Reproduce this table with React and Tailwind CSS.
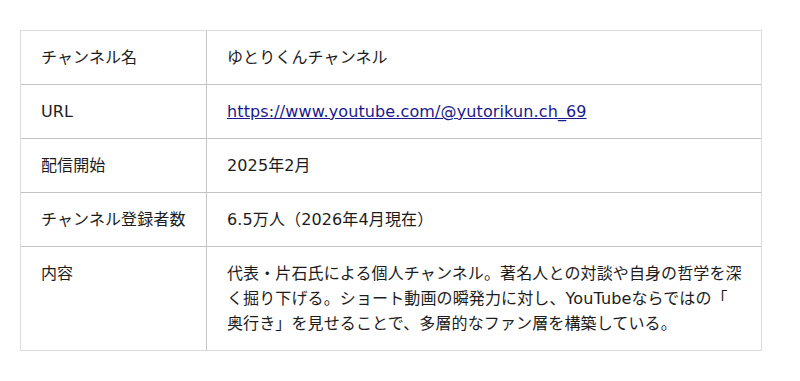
const rows = [
  { label: 'チャンネル名', value: 'ゆとりくんチャンネル' },
  { label: 'URL', value: 'https://www.youtube.com/@yutorikun.ch_69', link: true },
  { label: '配信開始', value: '2025年2月' },
  { label: 'チャンネル登録者数', value: '6.5万人（2026年4月現在）' },
  {
    label: '内容',
    lines: [
      '代表・片石氏による個人チャンネル。著名人との対談や自身の哲学を深',
      'く掘り下げる。ショート動画の瞬発力に対し、YouTubeならではの「',
      '奥行き」を見せることで、多層的なファン層を構築している。',
    ],
  },
];

export default function App() {
  return (
    <div
      className="min-h-screen bg-white pt-[30px] pl-[20px] text-[16px] leading-[25px] tracking-[0.12px] text-[#1c1c1c]"
      style={{ fontFamily: '"DejaVu Sans", "Noto Sans CJK JP", sans-serif' }}
    >
      <div className="w-[742px] border border-[#dcdcdc]">
        {rows.map((r, i) => (
          <div
            key={r.label}
            className={`flex ${i < rows.length - 1 ? 'border-b border-[#c4c4c4]' : ''}`}
          >
            <div className="w-[186px] shrink-0 border-r border-[#c4c4c4] px-[20px] py-[14px]">
              {r.label}
            </div>
            <div className="flex-1 px-[20px] py-[14px]">
              {r.link ? (
                <a href={r.value} className="text-[#1a1a8c] underline">
                  {r.value}
                </a>
              ) : r.lines ? (
                r.lines.map((l) => <div key={l} className="whitespace-nowrap">{l}</div>)
              ) : (
                r.value
              )}
            </div>
          </div>
        ))}
      </div>
    </div>
  );
}
